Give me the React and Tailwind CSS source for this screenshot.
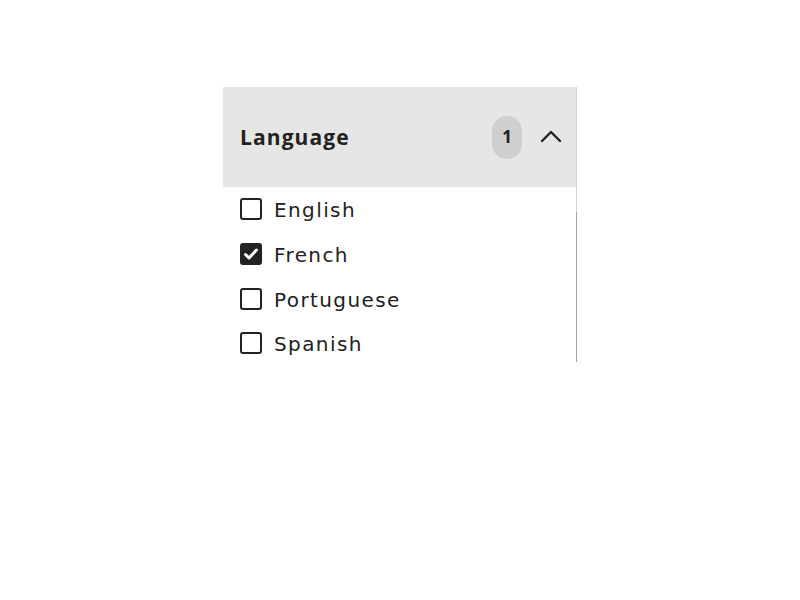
import React, { useState } from 'react'

const LANGUAGES = ['English', 'French', 'Portuguese', 'Spanish']

const Checkbox = ({ checked }) => (
    <span
        className={
            'flex h-[22px] w-[22px] shrink-0 items-center justify-center rounded-[3px] border-2 border-[#222] ' +
            (checked ? 'bg-[#222]' : 'bg-white')
        }
    >
        {checked && (
            <svg viewBox="0 0 16 16" className="h-[16px] w-[16px]" fill="none" stroke="white" strokeWidth="3" strokeLinecap="round" strokeLinejoin="round">
                <path d="M2.5 8.5l3.5 3.5 7.5-8" />
            </svg>
        )}
    </span>
)

const App = () => {
    const [selected, setSelected] = useState(['French'])

    const toggle = (lang) => {
        setSelected((s) => (s.includes(lang) ? s.filter((l) => l !== lang) : [...s, lang]))
    }

    return (
        <div className="min-h-[600px] w-[800px] bg-white pt-[87px] pl-[223px] text-[#222]">
            <div className="flex h-[275px] w-[354px]">
                <div className="flex w-[353px] flex-col overflow-hidden">
                    {/* header */}
                    <div className="flex h-[100px] shrink-0 items-center bg-[#e6e6e4] pl-[17px] pr-[14px] font-['Open_Sans',sans-serif]">
                        <h3 className="flex-1 pt-[1px] text-[21px] font-bold tracking-[1.1px]">Language</h3>
                        <span className="flex h-[43px] w-[30px] items-center justify-center rounded-full bg-[#cfcfcd] text-[17px] font-bold">
                            {selected.length}
                        </span>
                        <svg viewBox="0 0 22 22" className="ml-[18px] h-[22px] w-[22px]" fill="none" stroke="#222" strokeWidth="2.4" strokeLinecap="round" strokeLinejoin="round">
                            <path d="M2 15l9-9 9 9" />
                        </svg>
                    </div>
                    {/* options */}
                    <ul className="flex flex-col pl-[17px] font-['DejaVu_Sans',sans-serif]">
                        {LANGUAGES.map((lang) => (
                            <li
                                key={lang}
                                onClick={() => toggle(lang)}
                                className="flex h-[44.67px] shrink-0 cursor-pointer items-center gap-[12px]"
                            >
                                <Checkbox checked={selected.includes(lang)} />
                                <span className="pt-[2px] text-[20px] tracking-[1.4px]">{lang}</span>
                            </li>
                        ))}
                    </ul>
                </div>
                {/* scroll track */}
                <div className="flex w-px flex-col">
                    <div className="h-[125px] bg-[#d6d6d6]" />
                    <div className="flex-1 bg-[#a3a3a3]" />
                </div>
            </div>
        </div>
    )
}

export default App
